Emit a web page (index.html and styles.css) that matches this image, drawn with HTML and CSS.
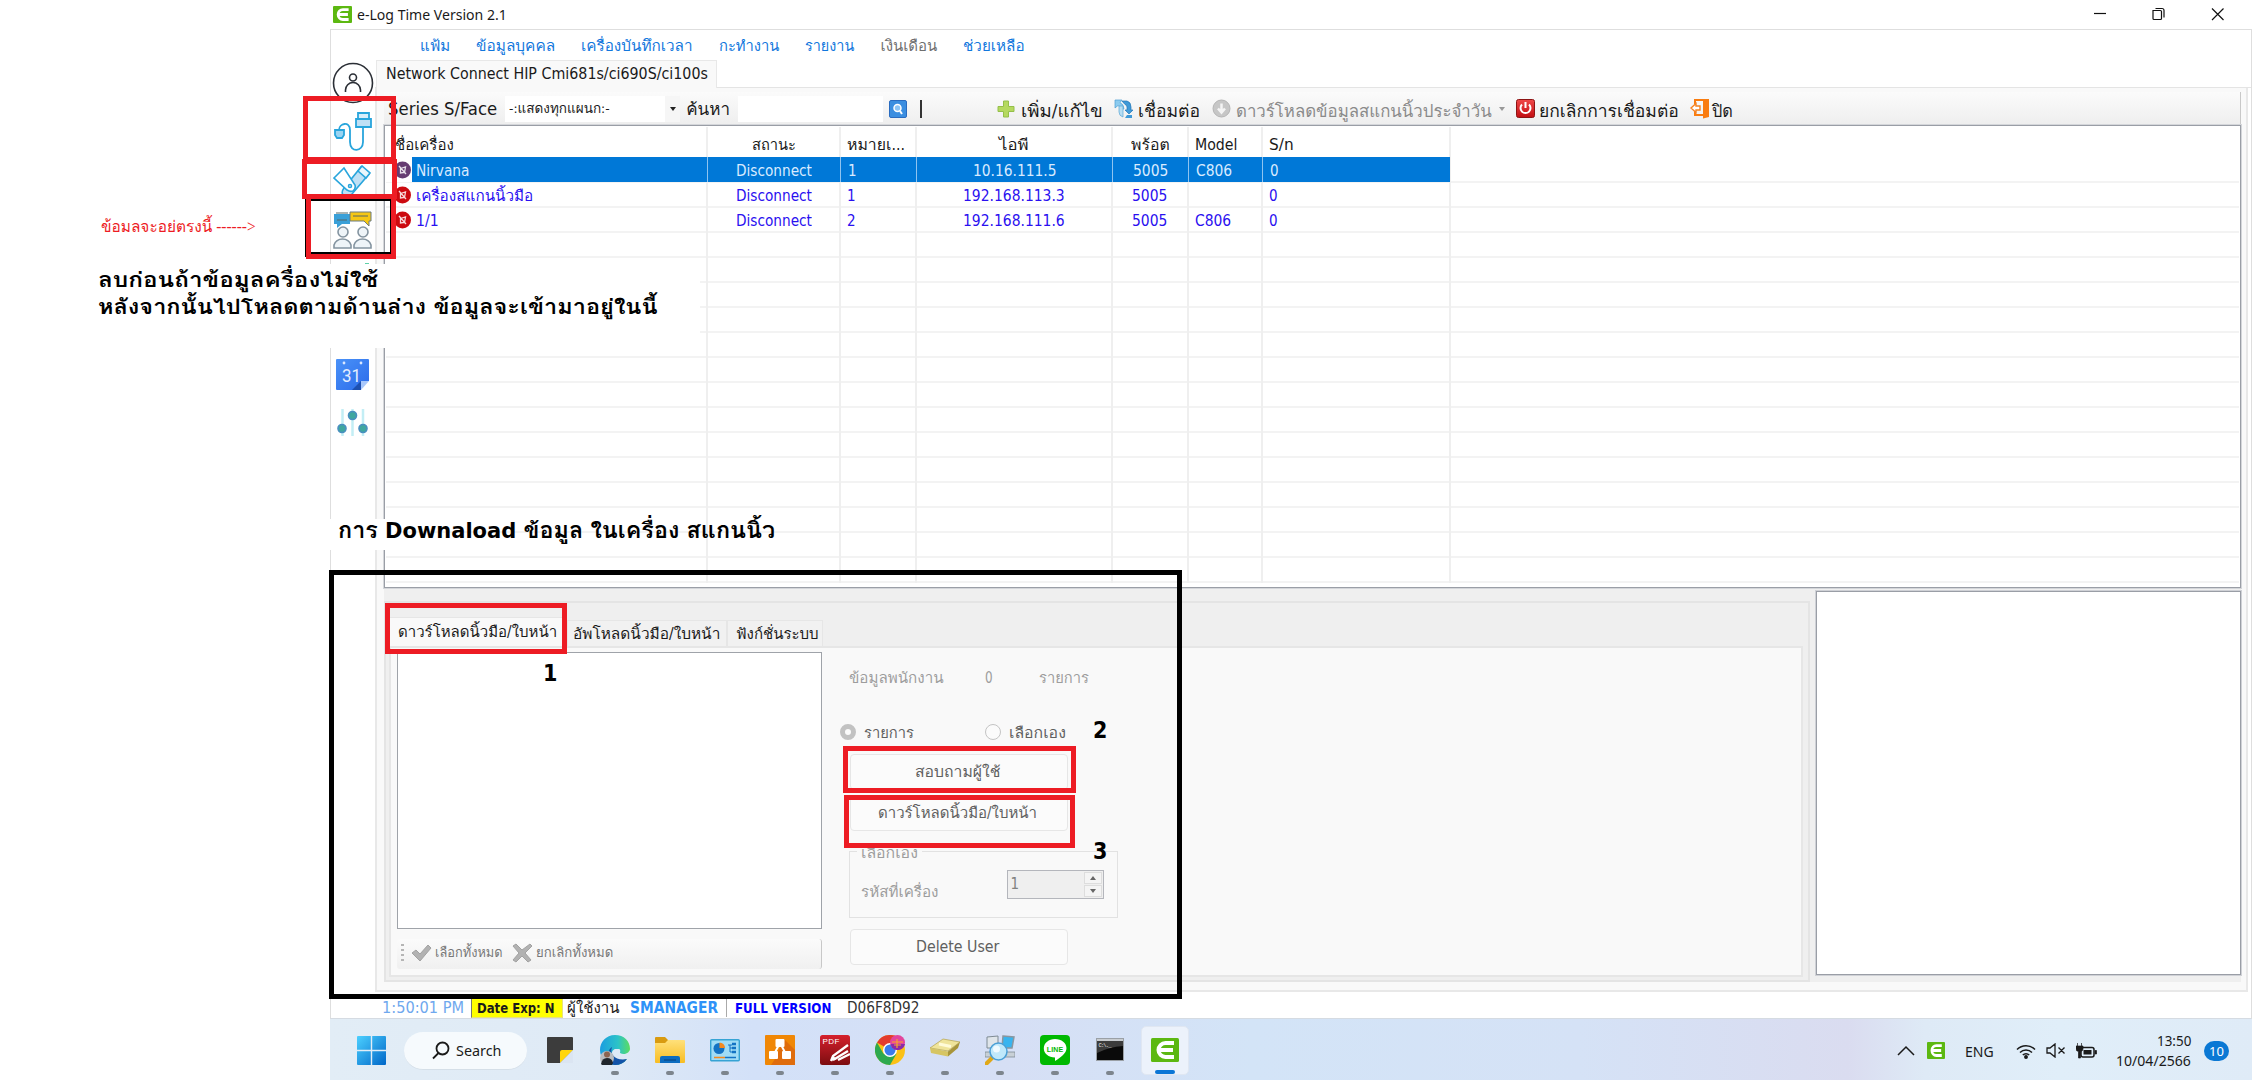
FILE: index.html
```html
<!DOCTYPE html>
<html lang="th">
<head>
<meta charset="utf-8">
<title>e-Log Time Version 2.1</title>
<link rel="stylesheet" href="styles.css">
</head>
<body>
<svg class="defs" width="0" height="0">
  <defs>
    <linearGradient id="gWin" x1="0" y1="0" x2="1" y2="1"><stop offset="0" stop-color="#4cd0ff"/><stop offset="1" stop-color="#0067c8"/></linearGradient>
    <linearGradient id="gEdge" x1="0" y1="0" x2="1" y2="0"><stop offset="0" stop-color="#1b9de0"/><stop offset=".6" stop-color="#2cc3c8"/><stop offset="1" stop-color="#5bdc60"/></linearGradient>
    <linearGradient id="gFold" x1="0" y1="0" x2="0" y2="1"><stop offset="0" stop-color="#ffe07a"/><stop offset="1" stop-color="#f8bd22"/></linearGradient>
    <linearGradient id="gPdf" x1="0" y1="0" x2="0" y2="1"><stop offset="0" stop-color="#d5202c"/><stop offset="1" stop-color="#7c0d10"/></linearGradient>
    <linearGradient id="gRed" x1="0" y1="0" x2="0" y2="1"><stop offset="0" stop-color="#f04a4a"/><stop offset="1" stop-color="#c20d12"/></linearGradient>
    <linearGradient id="gCal" x1="0" y1="0" x2="1" y2="1"><stop offset="0" stop-color="#4a92f8"/><stop offset="1" stop-color="#2b6bea"/></linearGradient>
    <g id="elog"><rect width="28" height="24" rx="1.500" fill="#5cb811"/><path d="M23 5H14.500a7 7 0 0 0 0 14H23M8 12h14" fill="none" stroke="#fff" stroke-width="4"/></g>
    <g id="unplug"><circle cx="8.500" cy="9" r="8.500" fill="currentColor"/><path d="M5 5l7 8M6.500 7.500l5-1.500-1 5.500-4 .500z" fill="none" stroke="#fff" stroke-opacity=".85" stroke-width="1.300"/></g>
  </defs>
</svg>

<div class="window">
  <header class="titlebar">
    <svg class="app-icon" width="19" height="17" viewBox="0 0 28 24" preserveAspectRatio="none"><use href="#elog"/></svg>
    <span class="title" data-w="150">e-Log Time Version 2.1</span>
    <svg class="win-btns" width="140" height="29" viewBox="0 0 140 29" fill="none" stroke="#111" stroke-width="1.200"><path d="M4 13.500h12"/><path d="M63 10.500h7.500a1 1 0 0 1 1 1v7a1 1 0 0 1-1 1h-6.500a1 1 0 0 1-1-1zM65.500 8.500h6.500a2 2 0 0 1 2 2v7"/><path d="M122 8.500l11.500 11.500M133.500 8.500L122 20"/></svg>
  </header>
  <div class="frame">
    <aside class="sidebar">
      <svg class="s-user" width="42" height="42" viewBox="0 0 42 42" fill="none" stroke="#2b2f36" stroke-width="1.600"><circle cx="21" cy="21" r="19.500"/><circle cx="21" cy="15.500" r="3.500"/><path d="M13.500 30v-2a7.500 7.500 0 0 1 15 0v2"/></svg>
      <svg class="s-cable" width="38" height="40" viewBox="0 0 38 40" fill="none" stroke="#28a5dc" stroke-width="1.800"><path d="M5 18c0-7 11-9 11 0v12c0 11 13 10 13 0V15"/><path d="M24 1h11v6H24z" fill="#d7eefa"/><path d="M22 7h15v8H22z" fill="#bfe0f5"/><path d="M1 18h9v5l-2 3H3l-2-3z" fill="#9ad4f2"/></svg>
      <svg class="s-drive" width="38" height="32" viewBox="0 0 38 32" fill="none" stroke="#28a5dc" stroke-width="1.600"><path d="M28 2l8 7L19 29q-5 4-9 1-2-3 1-7z" fill="#bfe0f5"/><path d="M25 6l4-5 8 7-4 5z" fill="#eaf6fc"/><path d="M1 13L11 3l11 17q1 4-2 6-3 1-6-1z" fill="#fff"/><circle cx="17" cy="21" r="1.500"/></svg>
      <svg class="s-people" width="40" height="40" viewBox="0 0 40 40"><path d="M1 4h16v10H9l-5 4v-4H1z" fill="#3aa0d8"/><path d="M17 2h21v9h-2v5l-5-5H17z" fill="#f5c714" stroke="#6b7a80"/><path d="M3 3h12M20 6h15M4 10h10" stroke="#566" /><g fill="#eef4f8" stroke="#8494a0" stroke-width="1.600"><path d="M1 38v-3a9 9 0 0 1 17 0v3z"/><circle cx="10" cy="22" r="5"/><path d="M21 38v-3a9 9 0 0 1 17 0v3z"/><circle cx="30" cy="22" r="5"/></g></svg>
      <i class="s-speck"></i>
      <svg class="s-cal" width="33" height="31" viewBox="0 0 33 31"><path d="M1 0h31q1 0 1 1v21h-8v9H1q-1 0-1-1V1q0-1 1-1z" fill="url(#gCal)"/><path d="M16 31l9-9v9z" fill="#1d4fb0"/><path d="M33 22l-8 9v-9z" fill="#a9c8fb"/><circle cx="8" cy="4" r="1.400" fill="#dbe8ff"/><circle cx="25" cy="4" r="1.400" fill="#dbe8ff"/><text x="6" y="23" font-size="19" textLength="19" lengthAdjust="spacingAndGlyphs" class="cal-num">31</text></svg>
      <svg class="s-slide" width="31" height="29" viewBox="0 0 31 29"><path d="M5.500 1v27M15.500 1v27M26 1v27" stroke="#c3eef5" stroke-width="2.500"/><g fill="#3fa79f" stroke="#4a8fc0" stroke-width="1.600"><circle cx="5" cy="20.500" r="4"/><circle cx="15.500" cy="7.500" r="4"/><circle cx="26" cy="20.500" r="4"/></g></svg>
    </aside>
    <main class="main">
      <nav class="menu">
        <span data-w="30">แฟ้ม</span><span data-w="79">ข้อมูลบุคคล</span><span data-w="111">เครื่องบันทึกเวลา</span><span data-w="60">กะทำงาน</span><span data-w="49">รายงาน</span><span class="dim" data-w="57">เงินเดือน</span><span data-w="62">ช่วยเหลือ</span>
      </nav>
      <div class="doc-tabs"><div class="doc-tab"><span data-w="322">Network Connect HIP Cmi681s/ci690S/ci100s</span></div></div>
      <section class="doc">
        <div class="toolbar">
          <span class="series" data-w="109">Series S/Face</span>
          <div class="combo"><span data-w="101">-:แสดงทุกแผนก:-</span><b><i class="caret"></i></b></div>
          <span class="find" data-w="44">ค้นหา</span>
          <div class="search"></div>
          <svg class="t-search" width="18" height="18" viewBox="0 0 18 18"><rect x=".5" y=".5" width="17" height="17" rx="1.500" fill="#3b8ee0" stroke="#2a6cc0"/><circle cx="8.500" cy="8" r="3.500" fill="#8cc4f5" stroke="#fff" stroke-width="1.500"/><path d="M11 11l2 3" stroke="#fff" stroke-width="2"/></svg>
          <i class="bar"></i>
          <svg class="t-plus" width="18" height="18" viewBox="0 0 18 18"><path d="M6.500 1h5v5.500H17v5h-5.500V17h-5v-5.500H1v-5h5.500z" fill="#b5d95f" stroke="#94bf4a"/></svg>
          <span class="lb" data-w="82">เพิ่ม/แก้ไข</span>
          <svg class="t-conn" width="19" height="20" viewBox="0 0 19 20"><path d="M1 1h7l-2 2.500q4 2 4 6.500H7q0-2.500-3-3.500L1 9z" fill="#8ccbef" stroke="#4a9fd4" stroke-width=".7"/><path d="M5 7v6q0 4 4 5V7z" fill="#b6ddf3" stroke="#5aa6d6" stroke-width=".7"/><path d="M8 2h5q4 1 4 6v3h2l-4 4-4-4h2V8q0-2-2-2.500z" fill="#3f9ad8" stroke="#2277b8" stroke-width=".7"/><path d="M18 19h-7l2-3h5z" fill="#3f9ad8"/></svg>
          <span class="lb" data-w="62">เชื่อมต่อ</span>
          <svg class="t-down" width="19" height="19" viewBox="0 0 19 19"><circle cx="9.500" cy="9.500" r="8.500" fill="#c6c6c6" stroke="#b4b4b4"/><path d="M9.500 4.500v8M6 9.500l3.500 4 3.500-4" fill="none" stroke="#f4f4f4" stroke-width="2.500"/></svg>
          <span class="lb off" data-w="256">ดาวร์โหลดข้อมูลสแกนนิ้วประจำวัน</span>
          <i class="caret light"></i>
          <svg class="t-power" width="19" height="19" viewBox="0 0 19 19"><rect x=".5" y=".5" width="18" height="18" rx="2" fill="url(#gRed)" stroke="#8c1414"/><path d="M6 5.500a5 5 0 1 0 7 0M9.500 3v6" fill="none" stroke="#fff" stroke-width="2"/></svg>
          <span class="lb" data-w="140">ยกเลิกการเชื่อมต่อ</span>
          <svg class="t-door" width="19" height="21" viewBox="0 0 19 21"><path d="M4 1h15v18l-6 1.500V3H4z" fill="#f97c10"/><path d="M5 1v5M5 13v4h8" fill="none" stroke="#f97c10" stroke-width="2"/><path d="M1 10l5-4.500v2.500h4v4H6v2.500z" fill="#fff" stroke="#f58220" stroke-width="1.400"/></svg>
          <span class="lb" data-w="21">ปิด</span>
        </div>
        <div class="grid">
          <div class="row head"><span><em data-w="59">ชื่อเครื่อง</em></span><span class="c"><em data-w="44">สถานะ</em></span><span><em data-w="58">หมายเ...</em></span><span class="c"><em data-w="29">ไอพี</em></span><span class="c"><em data-w="39">พร้อต</em></span><span><em data-w="43">Model</em></span><span><em data-w="25">S/n</em></span></div>
          <div class="row sel"><span class="name"><svg width="17" height="18" class="ico-sel"><use href="#unplug"/></svg><em data-w="53">Nirvana</em></span><span class="c"><em data-w="76">Disconnect</em></span><span><em>1</em></span><span class="c"><em data-w="84">10.16.111.5</em></span><span class="c"><em data-w="35">5005</em></span><span><em data-w="36">C806</em></span><span><em>0</em></span></div>
          <div class="row"><span class="name"><svg width="17" height="18" class="ico-red"><use href="#unplug"/></svg><em data-w="117">เครื่องสแกนนิ้วมือ</em></span><span class="c"><em data-w="76">Disconnect</em></span><span><em>1</em></span><span class="c"><em data-w="102">192.168.113.3</em></span><span class="c"><em data-w="35">5005</em></span><span></span><span><em>0</em></span></div>
          <div class="row"><span class="name"><svg width="17" height="18" class="ico-red"><use href="#unplug"/></svg><em data-w="23">1/1</em></span><span class="c"><em data-w="76">Disconnect</em></span><span><em>2</em></span><span class="c"><em data-w="102">192.168.111.6</em></span><span class="c"><em data-w="35">5005</em></span><span><em data-w="36">C806</em></span><span><em>0</em></span></div>
        </div>
        <div class="lower">
          <div class="tabs-box">
            <div class="tabs">
              <div class="tab on"><span data-w="159">ดาวร์โหลดนิ้วมือ/ใบหน้า</span></div>
              <div class="tab two"><span data-w="147">อัพโหลดนิ้วมือ/ใบหน้า</span></div>
              <div class="tab three"><span data-w="83">ฟังก์ชั่นระบบ</span></div>
            </div>
            <div class="page">
              <div class="left-col">
                <div class="list"></div>
                <div class="list-bar">
                  <i class="grip"></i>
                  <svg class="l-check" width="21" height="18" viewBox="0 0 21 18"><path d="M1 9l4-3 4 4 8-9 3 3L9 17z" fill="#b2b2b2" stroke="#a2a2a2"/></svg>
                  <span data-w="68">เลือกทั้งหมด</span>
                  <svg class="l-x" width="21" height="20" viewBox="0 0 21 20"><path d="M1 3l3-2 6 6 8-6 2 2-7 7 6 7-3 2-6-6-6 6-3-2 6-7z" fill="#b2b2b2" stroke="#a2a2a2"/></svg>
                  <span data-w="77">ยกเลิกทั้งหมด</span>
                </div>
              </div>
              <div class="right-col">
                <div class="counts"><span data-w="95">ข้อมูลพนักงาน</span><span data-w="8">0</span><span data-w="50">รายการ</span></div>
                <div class="radios"><i class="radio on"></i><span data-w="50">รายการ</span><i class="radio"></i><span data-w="57">เลือกเอง</span></div>
                <div class="btn b1"><span data-w="85">สอบถามผู้ใช้</span></div>
                <div class="btn b2"><span data-w="159">ดาวร์โหลดนิ้วมือ/ใบหน้า</span></div>
                <div class="group">
                  <div class="legend"><span data-w="57">เลือกเอง</span></div>
                  <div class="group-row"><span data-w="78">รหัสที่เครื่อง</span>
                    <div class="spin"><span>1</span><div class="arrows"><b><i class="up"></i></b><b><i class="dn"></i></b></div></div>
                  </div>
                </div>
                <div class="btn b3"><span data-w="83">Delete User</span></div>
              </div>
            </div>
          </div>
          <div class="log"></div>
        </div>
      </section>
      <footer class="status">
        <span class="clock" data-w="82">1:50:01 PM</span>
        <div class="exp"><span data-w="78">Date Exp: N</span></div>
        <span class="usr" data-w="52">ผู้ใช้งาน</span>
        <span class="mgr" data-w="88">SMANAGER</span>
        <i class="sep"></i>
        <span class="full" data-w="96">FULL VERSION</span>
        <span class="code" data-w="72">D06F8D92</span>
      </footer>
    </main>
  </div>
</div>

<div class="taskbar">
  <svg class="start" width="29" height="29" viewBox="0 0 29 29"><path d="M0 1q0-1 1-1h12.800v13.800H0zM15.200 0H28q1 0 1 1v12.800H15.200zM0 15.200h13.800V29H1q-1 0-1-1zM15.200 15.200H29V28q0 1-1 1H15.200z" fill="url(#gWin)"/></svg>
  <div class="pill"><svg width="18" height="19" viewBox="0 0 18 19" fill="none" stroke="#1a1a1a" stroke-width="1.800"><circle cx="10.500" cy="7.500" r="6"/><path d="M6.500 12L1 17.500"/></svg><span data-w="45">Search</span></div>
  <div class="apps">
    <div class="app"><svg width="30" height="30" viewBox="0 0 30 30"><path d="M2 3q0-1 1-1h24q1 0 1 1v12L15 28H3q-1 0-1-1z" fill="#3c3c3c"/><path d="M15 28V17q0-2 2-2h11z" fill="#ffd60a"/><path d="M28 15v13H15z" fill="#dbe5f2"/></svg></div>
    <div class="app run"><svg width="30" height="30" viewBox="0 0 30 30"><path d="M15 0C6 0 0 7 0 15s6 15 15 15c5 0 9-2 12-6-6 3-15 1-15-6 0-3 3-4 3-4h4c2 0 1 4 1 4 5 3 10-1 10-4C30 6 24 0 15 0z" fill="url(#gEdge)"/><path d="M12 12c-3 8 4 14 15 12-3 4-7 6-12 6-5 0-7-4-7-9s2-8 4-9z" fill="#1353a8"/><circle cx="7" cy="23" r="7" fill="#b9bcc0"/><path d="M1 29q1-6 6-6t6 5l-1 2H2z" fill="#20262c"/><circle cx="7" cy="19.500" r="3" fill="#8c6450"/></svg></div>
    <div class="app run"><svg width="30" height="30" viewBox="0 0 30 30"><path d="M0 3q0-1 1-1h9l3 3v5H0z" fill="#d99b10"/><path d="M0 8h10l3-3h16q1 0 1 1v21q0 1-1 1H1q-1 0-1-1z" fill="url(#gFold)"/><path d="M5 28v-5q0-2 2-2h16q2 0 2 2v5z" fill="#0c6cc0"/><path d="M9 25h12" stroke="#063f78"/></svg></div>
    <div class="app run"><svg width="30" height="30" viewBox="0 0 30 30"><rect x=".7" y="4.700" width="28.600" height="21" rx="1" fill="#9fdcf6" stroke="#36a3d4" stroke-width="1.400"/><circle cx="9" cy="13.500" r="5.500" fill="#1373c4"/><path d="M9.500 13V7.500a5.500 5.500 0 0 1 5.500 5.500z" fill="#f58a1f"/><path d="M18 10h4M20 10v7h3M20 13h3" stroke="#1373c4" fill="none"/><path d="M22 9h4M22 13h4M22 17h4" stroke="#1373c4" stroke-width="2.400"/><path d="M4 22.500h11" stroke="#f58a1f" stroke-width="1.500"/><path d="M15 22.500h11" stroke="#1373c4" stroke-width="1.500"/></svg></div>
    <div class="app run"><svg width="30" height="30" viewBox="0 0 30 30"><rect width="30" height="30" rx="1" fill="#f08705"/><path d="M19 4l11 11v15H6l4-6z" fill="#df6c0c"/><path d="M15 8L8 21M15 8l7 13" stroke="#fff" stroke-width="2"/><rect x="10.500" y="4" width="9" height="8" rx="1" fill="#fff"/><rect x="4" y="16" width="9" height="8" rx="1" fill="#fff"/><rect x="17" y="16" width="9" height="8" rx="1" fill="#fff"/></svg></div>
    <div class="app run"><svg width="30" height="30" viewBox="0 0 30 30"><rect width="30" height="30" rx="2.500" fill="url(#gPdf)"/><text x="2.500" y="9" font-size="8" textLength="17" class="pdf-txt">PDF</text><path d="M11 26l2-5L28 10M13 25l15-9M18 25l12-6" fill="none" stroke="#fff" stroke-width="2.300"/><path d="M11 26l2-5 4 3z" fill="#fff"/></svg></div>
    <div class="app run"><svg width="30" height="30" viewBox="0 0 30 30"><circle cx="15" cy="15" r="15" fill="#fbc116"/><path d="M15 15L2 7.500A15 15 0 0 1 28 7.500H15z" fill="#e33b2e"/><path d="M2 7.500A15 15 0 0 0 15 30l6.500-11.300L15 15 8.500 18.700z" fill="#2da94f"/><circle cx="15" cy="15" r="7" fill="#fff"/><circle cx="15" cy="15" r="5.500" fill="#3a7bec"/><circle cx="22.500" cy="7.500" r="7.500" fill="#e2459c"/><path d="M15.500 9h14.500a7.500 7.500 0 0 1-13 3.500z" fill="#8a2ba8"/><path d="M17 7h11M19 10h7M22 4v9" stroke="#f9a32c" stroke-width="1.200"/></svg></div>
    <div class="app run"><svg width="30" height="30" viewBox="0 0 30 30"><path d="M0 13L13 4l17 3-12 9z" fill="#efe49a" stroke="#b5a24c" stroke-width=".7"/><path d="M0 13l18 3.500v5L1 18z" fill="#d6c563"/><path d="M18 16.500L30 7l-2 6-10 8.500z" fill="#a8953a"/><path d="M9 9l12 2.500" stroke="#fffbd8" stroke-width="3"/></svg></div>
    <div class="app run"><svg width="30" height="30" viewBox="0 0 30 30"><path d="M2 2l11-1v12H2z" fill="#dfe5ea" stroke="#7f8b94"/><path d="M18 1l11 1-2 11H17z" fill="#38b4ef" stroke="#8a97a0" stroke-width="1.500"/><path d="M20 17h10v5H20zM0 17h8v5H0z" fill="#c8d0d6" stroke="#7f8b94" stroke-width=".8"/><path d="M1.500 28.500l6-6" stroke="#e0a818" stroke-width="4" stroke-linecap="round"/><circle cx="13.500" cy="16.500" r="8.500" fill="#bfe8fb" stroke="#4a9fd6" stroke-width="1.500"/><circle cx="11.500" cy="14" r="3.500" fill="#effaff"/></svg></div>
    <div class="app run"><svg width="30" height="30" viewBox="0 0 30 30"><rect width="30" height="30" rx="4" fill="#00b900"/><path d="M15 4c6.500 0 11.500 4 11.500 9.300 0 5-6 9.500-11.500 12.700v-3.500C8.500 22.500 3.800 18.500 3.800 13.300 3.800 8 8.800 4 15 4z" fill="#fff"/><text x="6.700" y="16.500" font-size="7" textLength="16.500" class="line-txt">LINE</text></svg></div>
    <div class="app run"><svg width="30" height="30" viewBox="0 0 30 30"><rect x="1.500" y="3.500" width="27" height="22" fill="#0a0a0a" stroke="#9aa0a6"/><path d="M2 4h26v2H2z" fill="#c8ccd0"/><path d="M2 6h26v5Q14 12 2 18z" fill="#3c3c3c"/><text x="3.500" y="11.500" font-size="5.500" textLength="13" class="cmd-txt">C:\._</text></svg></div>
    <div class="app active"><svg width="28" height="24" viewBox="0 0 28 24"><use href="#elog"/></svg></div>
  </div>
  <div class="tray">
    <svg class="chev" width="18" height="11" viewBox="0 0 18 11" fill="none" stroke="#1a1a1a" stroke-width="1.500"><path d="M1 10l8-8 8 8"/></svg>
    <svg class="tray-e" width="18" height="17" viewBox="0 0 28 24" preserveAspectRatio="none"><use href="#elog"/></svg>
    <span class="lang" data-w="29">ENG</span>
    <svg class="wifi" width="20" height="16" viewBox="0 0 20 16" fill="none" stroke="#1a1a1a" stroke-width="1.500"><path d="M1 6.500a12.500 12.500 0 0 1 18 0M4 9.500a8.500 8.500 0 0 1 12 0M6.800 12a4.500 4.500 0 0 1 6.400 0"/><circle cx="10" cy="14" r="1.200" fill="#1a1a1a"/></svg>
    <svg class="vol" width="20" height="15" viewBox="0 0 20 15" fill="none" stroke="#1a1a1a" stroke-width="1.300"><path d="M1 5h3l5-4v13L4 10H1zM12.500 4.500l6 6M18.500 4.500l-6 6"/></svg>
    <svg class="bat" width="21" height="16" viewBox="0 0 21 16"><rect x="5" y="4.500" width="13" height="9.500" rx="2" fill="none" stroke="#1a1a1a" stroke-width="1.500"/><rect x="7.500" y="7" width="8" height="4.500" fill="#1a1a1a"/><path d="M19 7.500h1.500v3.500H19zM0 3h7v3q0 2-2.500 2.500V15h-2V8.500Q0 8 0 6zM1.500 0v3M5.500 0v3" fill="#1a1a1a" stroke="#1a1a1a" stroke-width=".7"/></svg>
    <div class="when"><span data-w="34">13:50</span><span data-w="75">10/04/2566</span></div>
    <div class="badge">10</div>
  </div>
</div>

<div class="notes">
  <i class="cover"></i>
  <div class="note red"><span data-w="155">ข้อมลจะอย่ตรงนี้ ------&gt;</span></div>
  <div class="note steps"><p><span data-w="280">ลบก่อนถ้าข้อมูลครื่องไม่ใช้</span></p><p><span data-w="560">หลังจากนั้นไปโหลดตามด้านล่าง ข้อมูลจะเข้ามาอยู่ในนี้</span></p></div>
  <div class="note dl"><span data-w="437">การ Downaload ข้อมูล ในเครื่อง สแกนนิ้ว</span></div>
  <i class="box black small"></i>
  <i class="box r1"></i><i class="box r2"></i><i class="box r3"></i>
  <i class="box black big"></i>
  <i class="box r4"></i><i class="box r5"></i><i class="box r6"></i>
  <b class="num n1">1</b><b class="num n2">2</b><b class="num n3">3</b>
</div>
<script src="fit.js"></script>
</body>
</html>
```
FILE: styles.css
```css
* { box-sizing: border-box; }
html, body { margin: 0; }
body {
  width: 2252px; height: 1080px; overflow: hidden; position: relative; background: #fff;
  font-family: "DejaVu Sans Condensed", "Waree", "Loma", "Noto Sans Thai Looped", "Garuda", "Noto Sans Thai", sans-serif;
  font-size: 15px; line-height: 20px; color: #1a1a1a;
}
em, i { font-style: normal; }
p { margin: 0; }
svg { display: block; flex: none; }
.defs { position: absolute; }
span, em { white-space: nowrap; }
[data-w] { display: inline-block; flex: none; transform-origin: 0 50%; }

.window { margin-left: 330px; height: 1019px; display: flex; flex-direction: column; }
.titlebar { height: 29px; flex: none; display: flex; align-items: center; padding: 0 0 1px 3px; }
.title { margin-left: 5px; font-family: "Noto Sans", sans-serif; font-size: 15px; }
.win-btns { margin-left: auto; margin-right: 22px; }
.frame { flex: 1; display: flex; border: 1px solid #dedede; border-bottom-color: #d5dbe2; min-height: 0; }

.sidebar { width: 44px; flex: none; display: flex; flex-direction: column; align-items: flex-start; padding-left: 1px; }
.s-user { margin-top: 32px; }
.s-cable { margin: 8px 0 0 2px; }
.s-drive { margin: 13px 0 0 1px; }
.s-people { margin: 13px 0 0 1px; }
.s-speck { width: 4px; height: 2px; margin: 13px 0 0 33px; background: #5fd0a8; }
.s-cal { margin: 94px 0 0 4px; }
.s-slide { margin: 18px 0 0 5px; }
.cal-num { fill: #e3edff; font-family: Roboto, sans-serif; }

.main { flex: 1; display: flex; flex-direction: column; min-width: 0; }
.menu { height: 30px; flex: none; display: flex; align-items: center; gap: 26px; padding: 1px 0 0 45px; color: #1277dd; }
.menu .dim { color: #6f6f6f; }
.doc-tabs { height: 28px; flex: none; display: flex; border-bottom: 1px solid #e4e4e4; }
.doc-tab { width: 341px; height: 28px; margin-left: 1px; padding: 3px 0 0 9px; background: #f9f9f9; border: 1px solid #e8e8e8; border-bottom: 0; }
.doc { height: 904px; flex: none; background: #f9f9f9; border: 2px solid #e8e8e8; border-top: 0; margin-right: 3px; padding: 4px 5px 0 7px; }
.toolbar { height: 33px; display: flex; align-items: center; padding-left: 4px; background: linear-gradient(#fbfbfb, #eee); font-size: 17px; color: #1a1a1a; border-right: 1px solid #c8c8c8; }
.series { font-size: 17px; }
.combo { width: 175px; height: 26px; margin-left: 8px; background: #fff; display: flex; align-items: center; padding-left: 4px; font-size: 13px; }
.combo b { margin-left: auto; width: 15px; height: 26px; background: #f6f6f6; display: flex; align-items: center; justify-content: center; }
.caret { border: 3.500px solid transparent; border-top: 4px solid #222; border-bottom: 0; }
.caret.light { border-top-color: #999; margin: 0 7px 0 8px; }
.find { margin-left: 6px; }
.search { width: 145px; height: 26px; margin-left: 8px; background: #fff; }
.t-search { margin-left: 6px; }
.bar { width: 2px; height: 18px; margin-left: 13px; background: #333; }
.t-plus { margin-left: 75px; }
.t-conn { margin-left: 11px; }
.t-down { margin-left: 12px; }
.t-door { margin-left: 11px; }
.lb { margin-left: 6px; position: relative; top: 2px; }
.t-conn + .lb { margin-left: 5px; }
.t-down + .lb { margin-left: 5px; }
.off { color: #8a8a8a; }
.t-power { margin-left: 4px; }
.t-power + .lb { margin-left: 4px; }
.t-door + .lb { margin-left: 3px; }

.grid {
  height: 463px; border: 1.500px solid #9a9ea6; outline: 1px solid #d4d6da; outline-offset: 0;
  background-color: #fff;
  --c: linear-gradient(#efefef, #efefef);
  background-image: var(--c), var(--c), var(--c), var(--c), var(--c), var(--c), var(--c), repeating-linear-gradient(#f3f3f3 0 2px, transparent 2px 25px);
  background-repeat: no-repeat;
  background-size: 2px 456px, 2px 456px, 2px 456px, 2px 456px, 2px 456px, 2px 456px, 2px 456px, 1853px 402px;
  background-position: 321px 1px, 454px 1px, 530px 1px, 726px 1px, 802px 1px, 876px 1px, 1064px 1px, 1px 55px;
}
.row { display: grid; grid-template-columns: 322px 133px 76px 196px 76px 74px 188px; height: 25px; color: #2a10f0; width: 1065px; }
.row > span { padding: 2px 0 0 7px; display: flex; align-items: center; }
.row > span.c { justify-content: center; padding-left: 0; }
.row > span.name { padding: 0 0 0 9px; gap: 5px; }
.name em { position: relative; top: 1px; }
.row.head { height: 31px; color: #1a1a1a; padding-top: 4px; }
.row.head > span:first-child { padding-left: 10px; }
.row.sel { color: #d9ebff; }
.row.sel > span { background: #0078d7; }
.row.sel > span + span { border-left: 1px solid #8fc4f0; }
.row.sel > span.name { background: linear-gradient(90deg, #fff 27px, #0078d7 27px); }
.ico-red { color: #cc0a10; }
.ico-sel { color: #663d72; }

.lower { height: 394px; display: flex; background: #efefef; padding-top: 3px; }
.tabs-box { width: 1427px; height: 381px; margin-top: 10px; border: 2px solid #e4e4e4; padding: 14px 5px 4px 3px; }
.tabs { display: flex; align-items: flex-end; height: 29px; }
.tab { height: 26px; border: 1px solid #e6e6e6; border-bottom: 0; background: #f1f1f1; padding-top: 3px; }
.tab.on { width: 178px; height: 29px; background: #f9f9f9; padding-left: 8px; padding-top: 4px; }
.tab.two { width: 160px; padding-left: 5px; }
.tab.three { width: 96px; padding-left: 8px; }
.page { height: 331px; background: #f9f9f9; border: 2px solid #e6e6e6; display: flex; padding: 4px 0 0 6px; }
.list { width: 425px; height: 277px; background: #fff; border: 1.500px solid #9fa3a9; }
.list-bar { margin-top: 10px; width: 425px; height: 30px; background: linear-gradient(#fbfbfb, #f0f0f0); border-radius: 3px; border-right: 1px solid #c8c8c8; display: flex; align-items: center; font-size: 13px; color: #777; padding-bottom: 2px; }
.grip { width: 3px; height: 19px; margin: 0 7px 0 4px; background: repeating-linear-gradient(#b5b5b5 0 2px, transparent 2px 5px); }
.l-check + span { margin-left: 3px; }
.l-x { margin-left: 9px; }
.l-x + span { margin-left: 3px; }
.right-col { margin-left: 18px; width: 290px; color: #606060; }
.counts { display: flex; color: #9d9d9d; margin: 16px 0 0 9px; height: 20px; }
.counts span:nth-child(2) { margin-left: 41px; }
.counts span:nth-child(3) { margin-left: 47px; }
.radios { display: flex; align-items: center; height: 20px; margin-top: 34px; }
.radio { width: 16px; height: 16px; border-radius: 50%; border: 1px solid #c4c4c4; background: #fbfbfb; }
.radio.on { border: 5px solid #c2c2c2; }
.radios span { margin-left: 8px; position: relative; top: 1px; }
.radios .radio + span + .radio { margin-left: 71px; }
.btn { width: 218px; height: 36px; margin-left: 10px; border: 1px solid #e6e6e6; border-radius: 4px; background: #fbfbfb; display: flex; align-items: center; justify-content: center; padding-right: 3px; }
.b1 { margin-top: 12px; }
.b2 { margin-top: 5px; }
.group { margin: 20px 0 0 9px; width: 269px; height: 67px; border: 1.500px solid #e2e2e2; color: #9d9d9d; }
.legend { margin: -9px 0 0 7px; width: 65px; height: 20px; padding-left: 4px; background: #f9f9f9; }
.group-row { display: flex; align-items: center; margin: 7px 0 0 11px; height: 29px; }
.group-row > span { position: relative; top: 7px; }
.spin { margin-left: 68px; width: 97px; height: 29px; border: 1.500px solid #b4b6bc; background: #efefef; display: flex; padding: 1px 1px 1px 3px; color: #808080; line-height: 24px; }
.arrows { margin-left: auto; width: 18px; display: grid; gap: 1px; }
.arrows b { border: 1px solid #ddd; display: flex; align-items: center; justify-content: center; background: #f4f4f4; }
.up { border: 3px solid transparent; border-bottom: 4px solid #666; border-top: 0; }
.dn { border: 3px solid transparent; border-top: 4px solid #666; border-bottom: 0; }
.b3 { margin-top: 11px; }
.log { margin-left: 6px; width: 425px; height: 384px; background: #fff; border: 1.500px solid #9a9ea6; outline: 1px solid #cfd1d6; }

.status { flex: 1; display: flex; align-items: center; padding: 5px 0 0 7px; font-size: 15px; }
.clock { color: #6fa8ee; }
.exp { margin-left: 7px; width: 92px; height: 21px; background: #ff0; border: 1px solid #e9e37a; border-left: 1px solid #777; padding-left: 5px; font-weight: bold; line-height: 21px; font-size: 14px; }
.usr { margin-left: 4px; }
.mgr { margin-left: 11px; color: #2e92f8; font-weight: bold; }
.sep { width: 1px; height: 18px; margin-left: 8px; background: #aaa; }
.full { margin-left: 8px; color: #00f; font-weight: bold; font-size: 14px; }
.code { margin-left: 15px; color: #333; }

.taskbar { margin-left: 330px; height: 61px; display: flex; align-items: center; padding: 2px 22px 0 27px; font-family: "Noto Sans", sans-serif; font-size: 15px; background: linear-gradient(90deg, #e2edf6 0, #dfeaf6 14%, #d3e1f8 22%, #d6dff5 35%, #d3e4f7 48%, #d5e2f6 65%, #dadcf0 79%, #deeaf6 83%, #e0eef9 90%, #dfebf7 100%); }
.pill { margin-left: 18px; width: 123px; height: 38px; border-radius: 19px; background: #f6fafd; border-bottom: 1px solid #d5dfe8; display: flex; align-items: center; padding-left: 28px; gap: 6px; }
.apps { display: flex; margin-left: 9px; }
.app { width: 48px; height: 49px; margin-right: 7px; border-radius: 5px; display: flex; align-items: center; justify-content: center; position: relative; padding-bottom: 1px; }
.app.run::after, .app.active::after { content: ""; position: absolute; bottom: 0; left: 20px; width: 8px; height: 4px; border-radius: 2px; background: #7d858d; }
.app.active { background: #ecf2fb; border: 1px solid #e0e7f2; }
.app.active::after { left: 13px; width: 20px; background: #0b76d6; }
.pdf-txt { fill: #fff; font-family: "Liberation Sans", sans-serif; }
.line-txt { fill: #00b900; font-weight: bold; font-family: "Liberation Sans", sans-serif; }
.cmd-txt { fill: #eee; font-family: "Liberation Mono", monospace; }
.tray { margin-left: auto; display: flex; align-items: center; position: relative; }
.tray-e { margin-left: 12px; }
.lang { margin-left: 20px; }
.wifi { margin-left: 22px; }
.vol { margin-left: 10px; }
.bat { margin-left: 10px; }
.when { display: flex; flex-direction: column; align-items: flex-end; margin-left: 18px; width: 76px; padding-bottom: 1px; }
.badge { margin-left: 13px; margin-right: 1px; width: 25px; height: 20px; border-radius: 10px; background: #0a78d4; color: #fff; text-align: center; line-height: 20px; font-size: 13px; }

.note { position: absolute; }
.red { left: 101px; top: 217px; color: #ed1c24; font-family: "Liberation Serif", "Norasi", "Loma", "Garuda", sans-serif; font-size: 16px; }
.steps { left: 90px; top: 264px; width: 610px; height: 84px; padding: 3px 0 0 8px; background: #fff; color: #000; font-weight: bold; font-size: 21px; line-height: 27px; }
.dl { left: 338px; top: 518px; color: #000; font-weight: bold; font-size: 22px; line-height: 26px; }
.cover { position: absolute; left: 329px; top: 519px; width: 66px; height: 31px; background: #fff; }
.box { position: absolute; border: 5px solid #ed1c24; }
.r1 { left: 303px; top: 96px; width: 93px; height: 66px; }
.r2 { left: 302px; top: 159px; width: 95px; height: 40px; }
.r3 { left: 306px; top: 194px; width: 90px; height: 65px; }
.r4 { left: 385px; top: 603px; width: 182px; height: 51px; }
.r5 { left: 843px; top: 746px; width: 233px; height: 47px; }
.r6 { left: 844px; top: 795px; width: 231px; height: 53px; }
.black { border-color: #000; }
.small { left: 305px; top: 199px; width: 87px; height: 58px; border-width: 2px 2px 5px 2px; }
.big { left: 329px; top: 570px; width: 853px; height: 429px; }
.num { position: absolute; font-size: 23px; line-height: 26px; color: #000; }
.n1 { left: 543px; top: 660px; }
.n2 { left: 1093px; top: 717px; }
.n3 { left: 1093px; top: 838px; }
```
FILE: fit.js
```js
// Sets each label to its nominal width, whatever font the system supplies.
document.querySelectorAll('[data-w]').forEach(function (el) {
  var want = parseFloat(el.dataset.w);
  var natural = el.offsetWidth;
  el.style.transform = 'scaleX(' + (want / natural).toFixed(4) + ')';
  el.style.marginRight = (want - natural) + 'px';
});
```
